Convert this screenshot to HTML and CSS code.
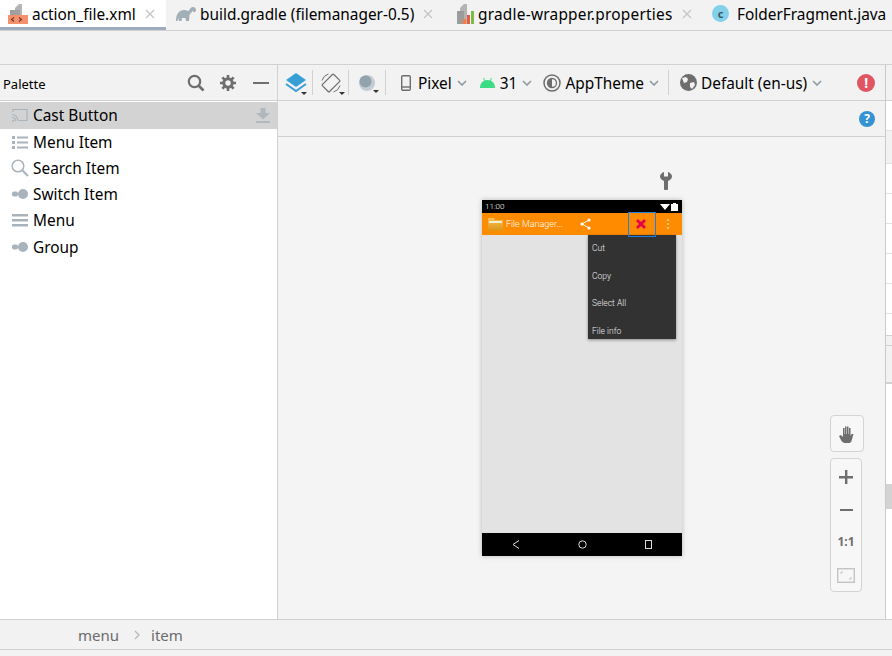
FILE: index.html
```html
<!DOCTYPE html>
<html lang="en">
<head>
    <meta charset="UTF-8">
    <title>action_file.xml</title>
    <link rel="stylesheet" href="styles.css">
</head>
<body>
    <div class="tabs">
        <div class="tab tab-active">
            <svg class="tab-icon" width="20" height="20" viewBox="0 0 20 20"><path d="M7 4l4-4h3v11H7z" fill="#b4b4b4"/><path d="M2 6h10v5H2z" fill="#a0a0a0"/><path d="M0 11h20v9H0z" fill="#f4916c"/><path d="M6 13.500l-2.500 2 2.500 2M11 13.500l2.500 2-2.500 2" fill="none" stroke="#6b3a26" stroke-width="1.200"/></svg>
            <span>action_file.xml</span>
            <svg class="tab-close" width="10" height="10" viewBox="0 0 10 10"><path d="M1 1l8 8M9 1l-8 8" stroke="#c4c4c4" stroke-width="1.200"/></svg>
        </div>
        <div class="tab tab-gradle">
            <svg class="tab-icon" width="20" height="14" viewBox="0 0 20 14"><path d="M0 14c0-7 3-11 8-11 2 0 3 .8 5 .8.6-2 2-3.800 4-3.800 1.500 0 3 1.200 3 3 0 1-.5 2.200-1.800 2.200-.8 0-1.200-.6-1.200-1.200l-.9.2c-.5 1.500-1.600 2.500-2.600 3.500L13 14h-3l-.5-3H6l-.5 3H3l-.7-3-.8 3z" fill="#a3afb6"/></svg>
            <span>build.gradle (filemanager-0.5)</span>
            <svg class="tab-close" width="10" height="10" viewBox="0 0 10 10"><path d="M1 1l8 8M9 1l-8 8" stroke="#c4c4c4" stroke-width="1.200"/></svg>
        </div>
        <div class="tab tab-props">
            <svg class="tab-icon" width="17" height="20" viewBox="0 0 17 20"><path d="M3 4l4-4h3v20H3z" fill="#b4b4b4"/><path d="M0 7h7v13H0z" fill="#9c9c9c"/><path d="M6 15h3v5H6z" fill="#f0803c"/><path d="M10 11h3v9h-3z" fill="#e85d4a"/><path d="M14 7h3v13h-3z" fill="#7cbb4a"/></svg>
            <span>gradle-wrapper.properties</span>
            <svg class="tab-close" width="10" height="10" viewBox="0 0 10 10"><path d="M1 1l8 8M9 1l-8 8" stroke="#c4c4c4" stroke-width="1.200"/></svg>
        </div>
        <div class="tab tab-class">
            <span class="class-badge">c</span>
            <span>FolderFragment.java</span>
        </div>
    </div>
    <div class="band"></div>

    <div class="main">
        <div class="palette">
            <div class="palette-head">
                <span class="palette-title">Palette</span>
                <svg class="head-search" width="18" height="18" viewBox="0 0 18 18"><circle cx="7.500" cy="7.500" r="5.700" fill="none" stroke="#6e6e6e" stroke-width="2.200"/><path d="M11.500 11.500l5 5" stroke="#6e6e6e" stroke-width="2.600"/></svg>
                <svg class="head-gear" width="16" height="16" viewBox="0 0 16 16"><circle cx="8" cy="8" r="4.200" fill="none" stroke="#6e6e6e" stroke-width="3"/><path d="M8 0v16M0 8h16M2.300 2.300l11.400 11.400M13.700 2.300L2.300 13.700" stroke="#6e6e6e" stroke-width="2.600" stroke-dasharray="3 10 3 0"/></svg>
                <span class="head-minus"></span>
            </div>
            <div class="palette-list">
                <div class="row row-selected">
                    <svg class="row-icon" width="16" height="14" viewBox="0 0 16 14"><path d="M1 4V1.500h14v11H7" fill="none" stroke="#a9b3bb" stroke-width="1.200"/><path d="M0 6.500c3 0 6 3 6 6.500M0 9.500c2 0 3.500 1.500 3.500 3.500" fill="none" stroke="#a9b3bb" stroke-width="1.200"/><circle cx="1" cy="13" r="1" fill="#a9b3bb"/></svg>
                    <span>Cast Button</span>
                    <svg class="row-download" width="14" height="15" viewBox="0 0 14 15"><path d="M4.500 0h5v5H14l-7 6.500L0 5h4.500zM0 13h14v2H0z" fill="#b0b8be"/></svg>
                </div>
                <div class="row">
                    <svg class="row-icon" width="16" height="13" viewBox="0 0 16 13"><path d="M0 0h3v3H0zM5 .5h11v2H5zM0 5h3v3H0zM5 5.500h11v2H5zM0 10h3v3H0zM5 10.500h11v2H5z" fill="#a9b3bb"/></svg>
                    <span>Menu Item</span>
                </div>
                <div class="row">
                    <svg class="row-icon row-icon-search" width="18" height="18" viewBox="0 0 18 18"><circle cx="7" cy="7" r="5.800" fill="none" stroke="#a9b3bb" stroke-width="1.500"/><path d="M11 11l6 6" stroke="#a9b3bb" stroke-width="2"/></svg>
                    <span>Search Item</span>
                </div>
                <div class="row">
                    <svg class="row-icon" width="16" height="10" viewBox="0 0 16 10"><rect x="0" y="2.500" width="6" height="5" rx="2" fill="#a9b3bb"/><circle cx="11" cy="5" r="5" fill="#a9b3bb"/></svg>
                    <span>Switch Item</span>
                </div>
                <div class="row">
                    <svg class="row-icon" width="16" height="13" viewBox="0 0 16 13"><path d="M0 0h16v2.500H0zM0 5h16v2.500H0zM0 10h16v2.500H0z" fill="#a9b3bb"/></svg>
                    <span>Menu</span>
                </div>
                <div class="row row-last">
                    <svg class="row-icon" width="16" height="10" viewBox="0 0 16 10"><rect x="0" y="2.500" width="6" height="5" rx="2" fill="#a9b3bb"/><circle cx="11" cy="5" r="5" fill="#a9b3bb"/></svg>
                    <span>Group</span>
                </div>
            </div>
        </div>

        <div class="design">
            <div class="toolbar">
                <div class="tool tool-layers">
                    <svg width="22" height="20" viewBox="0 0 22 20"><path d="M11 0l10 7-10 7L1 7z" fill="#389fd6"/><path d="M1 11l10 7 10-7" fill="none" stroke="#389fd6" stroke-width="2"/></svg>
                    <i class="caret"></i>
                </div>
                <b class="tool-sep"></b>
                <div class="tool tool-rotate">
                    <svg width="20" height="20" viewBox="0 0 20 20"><rect x="5" y="2" width="10" height="16" rx="1" transform="rotate(45 10 10)" fill="none" stroke="#6e6e6e" stroke-width="1.200"/><path d="M1 7.500A9.300 9.300 0 0 1 7.500 1M19 12.500a9.300 9.300 0 0 1-6.500 6.500" fill="none" stroke="#6e6e6e" stroke-width="1"/></svg>
                    <i class="caret"></i>
                </div>
                <b class="tool-sep"></b>
                <div class="tool tool-night">
                    <svg width="16" height="16" viewBox="0 0 16 16"><circle cx="8" cy="8" r="8" fill="#c3ccd2"/><circle cx="6.500" cy="6.500" r="6" fill="#93a3ad"/></svg>
                    <i class="caret"></i>
                </div>
                <b class="tool-sep"></b>
                <div class="tool tool-device">
                    <svg width="10" height="16" viewBox="0 0 10 16"><rect x=".7" y=".7" width="8.600" height="14.600" rx="1.200" fill="none" stroke="#6e6e6e" stroke-width="1.400"/><path d="M1 12h8" stroke="#6e6e6e" stroke-width="1.400"/></svg>
                    <span>Pixel</span>
                    <svg class="chev" width="10" height="6" viewBox="0 0 10 6"><path d="M1 1l4 4 4-4" fill="none" stroke="#8c99a3" stroke-width="1.600"/></svg>
                </div>
                <div class="tool tool-api">
                    <svg width="15" height="10" viewBox="0 0 15 10"><path d="M0 10C0 5 3 2 7.500 2S15 5 15 10z" fill="#3ddc84"/><path d="M3.500 0l1.500 3M11.500 0L10 3" stroke="#3ddc84"/></svg>
                    <span>31</span>
                    <svg class="chev" width="10" height="6" viewBox="0 0 10 6"><path d="M1 1l4 4 4-4" fill="none" stroke="#8c99a3" stroke-width="1.600"/></svg>
                </div>
                <div class="tool tool-theme">
                    <svg width="18" height="18" viewBox="0 0 18 18"><circle cx="9" cy="9" r="8" fill="none" stroke="#6e6e6e" stroke-width="1.500"/><circle cx="9" cy="9" r="4.500" fill="none" stroke="#6e6e6e" stroke-width="1.300"/><path d="M9 4.500a4.500 4.500 0 0 0 0 9z" fill="#6e6e6e"/></svg>
                    <span>AppTheme</span>
                    <svg class="chev" width="10" height="6" viewBox="0 0 10 6"><path d="M1 1l4 4 4-4" fill="none" stroke="#8c99a3" stroke-width="1.600"/></svg>
                </div>
                <b class="tool-sep tool-sep-locale"></b>
                <div class="tool tool-locale">
                    <svg width="17" height="17" viewBox="0 0 17 17"><circle cx="8.500" cy="8.500" r="8.500" fill="#6e6e6e"/><path d="M2 4l4-1 2 2-1 3-3 1zM10 9l4-1 1 3-3 4-2-2z" fill="#f2f2f2"/></svg>
                    <span>Default (en-us)</span>
                    <svg class="chev" width="10" height="6" viewBox="0 0 10 6"><path d="M1 1l4 4 4-4" fill="none" stroke="#8c99a3" stroke-width="1.600"/></svg>
                </div>
                <span class="error-badge">!</span>
            </div>
            <div class="subbar"><span class="help-badge">?</span></div>

            <div class="canvas">
                <svg class="wrench" width="12" height="18" viewBox="0 0 12 18"><path d="M4 0v4.500h4V0c2.500 1 4 2.500 4 4.500S10 8 8 9v7.500a2 2 0 0 1-4 0V9C2 8 0 6.500 0 4.500S1.500 1 4 0z" fill="#6e6e6e"/></svg>
                <div class="phone">
                    <div class="phone-status">
                        <span>11:00</span>
                        <svg width="18" height="8" viewBox="0 0 18 8"><path d="M0 1h10L5 7zM11 1h2V0h3v1h2v7h-7z" fill="#fff"/></svg>
                    </div>
                    <div class="appbar">
                        <svg class="app-folder" width="15" height="13" viewBox="0 0 15 13"><defs><linearGradient id="folderFill" x1="0" y1="0" x2="0" y2="1"><stop offset="0" stop-color="#f4c25a"/><stop offset="1" stop-color="#dd9412"/></linearGradient></defs><path d="M0 0h6l1 2h8v11H0z" fill="url(#folderFill)"/><path d="M1 3h13v2H1z" fill="#f6eccf"/></svg>
                        <span class="app-title">File Manager...</span>
                        <svg class="app-share" width="11" height="12" viewBox="0 0 11 12"><path d="M9 2L2 6l7 4" fill="none" stroke="#fff"/><circle cx="9" cy="2" r="1.600" fill="#fff"/><circle cx="2" cy="6" r="1.600" fill="#fff"/><circle cx="9" cy="10" r="1.600" fill="#fff"/></svg>
                        <svg class="app-delete" width="10" height="10" viewBox="0 0 10 10"><path d="M1 1l8 8M9 1l-8 8" stroke="#e6004c" stroke-width="2.800"/></svg>
                        <span class="app-more"><i></i><i></i><i></i></span>
                    </div>
                    <div class="phone-body"></div>
                    <div class="phone-nav">
                        <svg width="8" height="9" viewBox="0 0 8 9"><path d="M7 .5L1 4.500l6 4" fill="none" stroke="#ddd"/></svg>
                        <svg width="9" height="9" viewBox="0 0 9 9"><circle cx="4.500" cy="4.500" r="3.700" fill="none" stroke="#ddd"/></svg>
                        <svg width="7" height="9" viewBox="0 0 7 9"><rect x=".5" y=".5" width="6" height="8" fill="none" stroke="#ddd"/></svg>
                    </div>
                    <div class="popup">
                        <span>Cut</span>
                        <span>Copy</span>
                        <span>Select All</span>
                        <span>File info</span>
                    </div>
                    <div class="selection"></div>
                </div>
                <div class="zoom-tools">
                    <div class="zoom-box zoom-hand">
                        <svg width="18" height="18" viewBox="0 0 18 18"><path d="M1 11l2-1 2 2V3h1.500v6H7V1.500h1.500V9H9V1.500h1.500V9h.5V3h1.500v8l1-2h2l-2 7c-.5 1.500-1.500 2-3 2H7c-1.500 0-2.500-1-3.500-2z" fill="#6e6e6e"/></svg>
                    </div>
                    <div class="zoom-box zoom-stack">
                        <svg width="14" height="14" viewBox="0 0 14 14"><path d="M6 0h2.400v6H14v2.400H8.400V14H6V8.400H0V6h6z" fill="#6e6e6e"/></svg>
                        <span class="zoom-minus"></span>
                        <span class="zoom-one">1:1</span>
                        <svg width="18" height="15" viewBox="0 0 18 15"><rect x=".7" y=".7" width="16.600" height="13.600" fill="none" stroke="#c4c4c4" stroke-width="1.400"/><path d="M4 6V4h2M14 9v2h-2" fill="none" stroke="#c4c4c4"/></svg>
                    </div>
                </div>
            </div>
        </div>

        <div class="side">
            <div class="side-cell side-head"></div>
            <div class="side-cell side-white side-first"></div>
            <div class="side-cell side-second"></div>
            <div class="side-cell side-white"></div>
            <div class="side-cell side-white"></div>
            <div class="side-cell side-white"></div>
            <div class="side-cell side-white"></div>
            <div class="side-cell side-white"></div>
            <div class="side-cell side-white side-short"></div>
            <div class="side-cell side-gap"></div>
            <div class="side-cell side-title"></div>
            <div class="side-list"><span class="side-thumb"></span></div>
        </div>
    </div>

    <div class="crumbs">
        <span>menu</span>
        <svg width="6" height="10" viewBox="0 0 6 10"><path d="M1 1l4 4-4 4" fill="none" stroke="#b5b5b5" stroke-width="1.200"/></svg>
        <span>item</span>
    </div>
</body>
</html>
```

FILE: styles.css
```css
html, body {
    margin: 0;
    padding: 0;
}
body {
    width: 892px;
    height: 656px;
    overflow: hidden;
    background-color: #f2f2f2;
    color: #000;
    font-family: 'Noto Sans', sans-serif;
    font-size: 15.400px;
}
.tabs {
    display: flex;
    height: 30px;
    border-bottom: 1px solid #d1d1d1;
    white-space: nowrap;
}
.tab {
    display: flex;
    align-items: center;
    height: 27px;
}
.tab span {
    margin-left: 4px;
    padding-top: 2px;
}
.tab-icon, .tab-close {
    flex: none;
}
.tab-close {
    margin-left: 9px;
}
.tab-active {
    width: 158px;
    padding-left: 8px;
    background-color: #fff;
    border-bottom: 3px solid #9eacbf;
}
.tab-gradle {
    width: 281px;
    padding-left: 10px;
}
.tab-props {
    width: 255px;
}
.tab-props span {
    letter-spacing: 0.240px;
}
.tab .class-badge {
    display: flex;
    align-items: center;
    justify-content: center;
    width: 17px;
    height: 17px;
    margin-left: 0;
    margin-right: 4px;
    padding-top: 0;
    border-radius: 50%;
    background-color: #82d0ea;
    color: #3c5a66;
    font-size: 11px;
    font-weight: bold;
}
.band {
    height: 33px;
    border-bottom: 1px solid #d1d1d1;
}

.main {
    display: flex;
    height: 554px;
    border-bottom: 1px solid #d1d1d1;
}
.palette {
    flex: none;
    width: 277px;
    border-right: 1px solid #d1d1d1;
}
.palette-head {
    display: flex;
    align-items: center;
    height: 35px;
    padding-left: 3px;
    border-bottom: 1px solid #d1d1d1;
}
.palette-title {
    width: 184px;
    padding-top: 2px;
    font-size: 13px;
}
.head-gear {
    margin-left: 15px;
}
.head-minus {
    width: 16px;
    height: 2px;
    margin-left: 17px;
    background-color: #6e6e6e;
}
.palette-list {
    height: 518px;
    padding-top: 1px;
    box-sizing: border-box;
    background-color: #fff;
}
.row {
    position: relative;
    display: flex;
    align-items: center;
    height: 26px;
    line-height: 26px;
}
.row-selected {
    height: 25px;
    padding-bottom: 2px;
    background-color: #d3d3d3;
}
.row-last {
    height: 28px;
}
.row-icon {
    flex: none;
    margin-left: 12px;
    margin-right: 5px;
}
.row-icon-search {
    margin-left: 11px;
}
.row span {
    position: absolute;
    left: 33px;
    padding-top: 2px;
}
.row-download {
    position: absolute;
    right: 7px;
    top: 6px;
}

.design {
    flex: none;
    width: 607px;
    border-right: 1px solid #c9c9c9;
}
.toolbar {
    display: flex;
    align-items: center;
    height: 35px;
    border-bottom: 1px solid #d1d1d1;
    white-space: nowrap;
}
.tool {
    position: relative;
    display: flex;
    align-items: center;
}
.tool span {
    padding-top: 2px;
}
.tool-sep {
    width: 1px;
    height: 25px;
    background-color: #d1d1d1;
}
.caret {
    position: absolute;
    right: -4px;
    bottom: -2px;
    border-left: 3px solid transparent;
    border-right: 3px solid transparent;
    border-top: 3px solid #333;
}
.tool-layers {
    margin-left: 7px;
    margin-right: 5px;
}
.tool-layers .caret {
    right: 0;
}
.tool-rotate {
    margin-left: 8px;
    margin-right: 7px;
}
.tool-night {
    margin-left: 10px;
    margin-right: 10px;
}
.tool-device {
    margin-left: 15px;
}
.tool-device span {
    margin-left: 7px;
}
.chev {
    margin-left: 5px;
}
.tool-api {
    margin-left: 13px;
}
.tool-api span {
    margin-left: 5px;
}
.tool-theme {
    margin-left: 11px;
}
.tool-theme span {
    margin-left: 4px;
}
.tool-sep-locale {
    margin-left: 9px;
}
.tool-locale {
    margin-left: 11px;
}
.tool-locale span {
    margin-left: 4px;
}
.error-badge, .help-badge {
    display: flex;
    align-items: center;
    justify-content: center;
    border-radius: 50%;
    color: #fff;
    font-weight: bold;
}
.error-badge {
    width: 18px;
    height: 18px;
    margin-left: 35px;
    background-color: #e05561;
    font-size: 14px;
}
.subbar {
    display: flex;
    align-items: center;
    justify-content: flex-end;
    height: 35px;
    padding-right: 10px;
    border-bottom: 1px solid #d1d1d1;
}
.help-badge {
    width: 16px;
    height: 16px;
    background-color: #3592d3;
    font-size: 12px;
}
.canvas {
    position: relative;
    height: 482px;
    background-color: #f4f4f4;
}
.wrench {
    position: absolute;
    left: 382px;
    top: 35px;
}

.phone {
    position: absolute;
    left: 204px;
    top: 63px;
    display: flex;
    flex-direction: column;
    width: 200px;
    height: 356px;
    background-color: #e3e3e3;
    box-shadow: 0 0 5px rgba(0,0,0,0.25);
    font-family: 'Roboto', sans-serif;
    font-size: 8.500px;
    font-weight: 300;
    color: #fff;
}
.phone-status {
    display: flex;
    align-items: center;
    justify-content: space-between;
    height: 13px;
    padding: 0 4px 0 3px;
    background-color: #000;
    font-size: 8px;
}
.appbar {
    display: flex;
    align-items: center;
    height: 22px;
    background-color: #ff8c00;
}
.app-folder {
    margin-left: 6px;
}
.app-title {
    width: 74px;
    margin-left: 3px;
    font-size: 9px;
    white-space: nowrap;
}
.app-delete {
    margin-left: 45px;
}
.app-more {
    display: flex;
    flex-direction: column;
    gap: 2px;
    margin-left: 21px;
}
.app-more i {
    width: 2px;
    height: 2px;
    background-color: #ffc27a;
}
.phone-body {
    flex: 1;
}
.phone-nav {
    display: flex;
    align-items: center;
    height: 23px;
    padding-left: 30px;
    gap: 58px;
    background-color: #000;
}
.popup {
    position: absolute;
    left: 106px;
    top: 35px;
    display: flex;
    flex-direction: column;
    justify-content: space-between;
    width: 88px;
    height: 104px;
    padding: 8px 0 3px 4px;
    box-sizing: border-box;
    background-color: #323232;
    box-shadow: 0 1px 3px rgba(0,0,0,0.4);
    color: #f0f0f0;
}
.selection {
    position: absolute;
    left: 146px;
    top: 12px;
    width: 26px;
    height: 23px;
    border: 1px solid #1f7fe0;
}

.zoom-tools {
    position: absolute;
    left: 552px;
    top: 278px;
    display: flex;
    flex-direction: column;
    gap: 6px;
}
.zoom-box {
    display: flex;
    flex-direction: column;
    align-items: center;
    width: 32px;
    border: 1px solid #d4d4d4;
    border-radius: 4px;
    background-color: #f7f7f7;
}
.zoom-hand {
    height: 35px;
    justify-content: center;
}
.zoom-stack {
    height: 134px;
    padding-top: 11px;
    box-sizing: border-box;
}
.zoom-minus {
    width: 13px;
    height: 2px;
    margin-top: 25px;
    background-color: #6e6e6e;
}
.zoom-one {
    margin-top: 23px;
    margin-bottom: 18px;
    color: #6e6e6e;
    font-size: 12px;
    font-weight: bold;
    line-height: 16px;
}

.side {
    flex: 1;
    display: flex;
    flex-direction: column;
}
.side-cell {
    flex: none;
    height: 30px;
    box-sizing: border-box;
    border-bottom: 1px solid #e2e2e2;
}
.side-head {
    height: 36px;
    border-bottom-color: #d1d1d1;
}
.side-white {
    background-color: #fff;
}
.side-second {
    height: 33px;
}
.side-short {
    height: 22px;
    border-bottom-color: #d1d1d1;
}
.side-gap {
    height: 10px;
    border-bottom-color: #d1d1d1;
}
.side-title {
    height: 38px;
    border-bottom: 2px solid #d1d1d1;
}
.side-list {
    position: relative;
    flex: 1;
    background-color: #fff;
}
.side-thumb {
    position: absolute;
    left: 0;
    right: 0;
    top: 100px;
    height: 25px;
    background-color: #d3d3d3;
}

.crumbs {
    display: flex;
    align-items: center;
    gap: 15px;
    height: 29px;
    padding-left: 78px;
    border-bottom: 1px solid #d1d1d1;
    color: #6b6b6b;
    font-size: 15px;
}
.crumbs span:last-child {
    margin-left: -4px;
}
```
